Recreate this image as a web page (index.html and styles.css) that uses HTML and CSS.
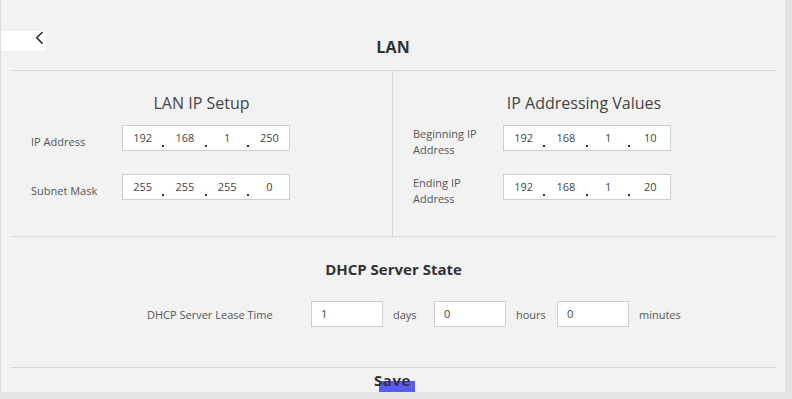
FILE: index.html
```html
<!DOCTYPE html>
<html>
<head>
<meta charset="utf-8">
<link rel="stylesheet" href="styles.css">
</head>
<body>
<div class="panel">
  <div class="top">
    <div class="back">
      <svg width="9" height="14" viewBox="0 0 9 14"><path d="M7.5 1 L1.8 6.8 L7.5 12.6" fill="none" stroke="#2b2f36" stroke-width="1.6"/></svg>
    </div>
    <h1 class="title">LAN</h1>
    <div></div>
  </div>
  <div class="content">
    <div class="columns">
      <div class="col col-left">
        <h2 class="col-title">LAN IP Setup</h2>
        <div class="row">
          <div class="label">IP Address</div>
          <div class="ip"><span class="seg">192</span><span class="dot"></span><span class="seg">168</span><span class="dot"></span><span class="seg">1</span><span class="dot"></span><span class="seg">250</span></div>
        </div>
        <div class="row">
          <div class="label">Subnet Mask</div>
          <div class="ip"><span class="seg">255</span><span class="dot"></span><span class="seg">255</span><span class="dot"></span><span class="seg">255</span><span class="dot"></span><span class="seg">0</span></div>
        </div>
      </div>
      <div class="col col-right">
        <h2 class="col-title">IP Addressing Values</h2>
        <div class="row">
          <div class="label two">Beginning IP<br>Address</div>
          <div class="ip"><span class="seg">192</span><span class="dot"></span><span class="seg">168</span><span class="dot"></span><span class="seg">1</span><span class="dot"></span><span class="seg">10</span></div>
        </div>
        <div class="row">
          <div class="label two">Ending IP<br>Address</div>
          <div class="ip"><span class="seg">192</span><span class="dot"></span><span class="seg">168</span><span class="dot"></span><span class="seg">1</span><span class="dot"></span><span class="seg">20</span></div>
        </div>
      </div>
    </div>
    <div class="dhcp">
      <h2 class="section-title">DHCP Server State</h2>
      <div class="lease">
        <div class="lease-label">DHCP Server Lease Time</div>
        <div class="box">1</div><div class="unit">days</div>
        <div class="box">0</div><div class="unit">hours</div>
        <div class="box">0</div><div class="unit">minutes</div>
      </div>
    </div>
    <div class="footer">
      <span class="save">Save</span>
    </div>
  </div>
</div>
</body>
</html>
```

FILE: styles.css
```css
html, body {
  margin: 0;
  padding: 0;
  background: #e4e4e4;
  width: 792px;
  height: 399px;
  overflow: hidden;
}
.panel {
  width: 784px;
  height: 392px;
  background: #f2f2f2;
  border-left: 1px solid #dcdcdc;
  overflow: hidden;
  font-family: "Open Sans", "Liberation Sans", sans-serif;
  color: #555;
}
.top {
  height: 70px;
  display: grid;
  grid-template-columns: 1fr auto 1fr;
  align-items: start;
  box-sizing: border-box;
  padding-top: 31px;
}
.back {
  width: 46px;
  height: 20px;
  background: #fff;
  margin-left: -1px;
  display: flex;
  justify-content: flex-end;
  padding-right: 2px;
  box-sizing: border-box;
}
.back svg { display: block; }
.title {
  margin: 6px 0 0;
  font-size: 16px;
  line-height: 20px;
  font-weight: 700;
  color: #333;
  letter-spacing: 0.2px;
}
.content {
  margin: 0 9px 0 10px;
}
.columns {
  display: grid;
  grid-template-columns: 382px 382px;
  border-top: 1px solid #d6d6d6;
  border-bottom: 1px solid #d6d6d6;
  height: 167px;
  box-sizing: border-box;
}
.col-left {
  border-right: 1px solid #d6d6d6;
  padding-left: 20px;
}
.col-right {
  padding-left: 20px;
}
.col-title {
  margin: 22px 0 12px;
  font-size: 16px;
  line-height: 20px;
  font-weight: 400;
  color: #444;
  text-align: center;
  padding-right: 20px;
}
.row {
  display: flex;
  align-items: center;
  height: 26px;
  margin-bottom: 23px;
}
.label {
  width: 91px;
  font-size: 11px;
  line-height: 16px;
  padding-top: 8px;
  color: #555;
}
.col-right .label { width: 90px; }
.ip {
  display: flex;
  width: 168px;
  height: 26px;
  box-sizing: border-box;
  border: 1px solid #cfcfcf;
  background: #fff;
  font-size: 11px;
  color: #444;
}
.seg {
  flex: 1;
  text-align: center;
  line-height: 24px;
}
.dot {
  width: 3px;
  position: relative;
}
.dot::after {
  content: "";
  position: absolute;
  left: 0;
  bottom: 3px;
  width: 2px;
  height: 2px;
  background: #333;
}
.dhcp {
  height: 131px;
  border-bottom: 1px solid #d6d6d6;
  box-sizing: border-box;
}
.section-title {
  margin: 0;
  padding-top: 22px;
  font-size: 15px;
  line-height: 20px;
  font-weight: 700;
  color: #333;
  text-align: center;
}
.lease {
  display: flex;
  align-items: center;
  margin-top: 22px;
  padding-left: 136px;
  font-size: 11px;
}
.lease-label {
  width: 164px;
  color: #555;
}
.box {
  width: 72px;
  height: 26px;
  box-sizing: border-box;
  border: 1px solid #cfcfcf;
  background: #fff;
  line-height: 24px;
  padding-left: 9px;
  color: #444;
  margin-right: 10px;
}
.unit {
  width: 41px;
  color: #555;
}
.footer {
  display: flex;
  justify-content: center;
  padding-top: 2px;
}
.save {
  position: relative;
  z-index: 0;
  font-size: 15px;
  line-height: 20px;
  font-weight: 700;
  color: #333;
  letter-spacing: 0.6px;
  margin-left: -2px;
}
.save::before {
  content: "";
  position: absolute;
  left: 5px;
  top: 11px;
  width: 36px;
  height: 14px;
  background: #5b5bf2;
  z-index: -1;
}
```
